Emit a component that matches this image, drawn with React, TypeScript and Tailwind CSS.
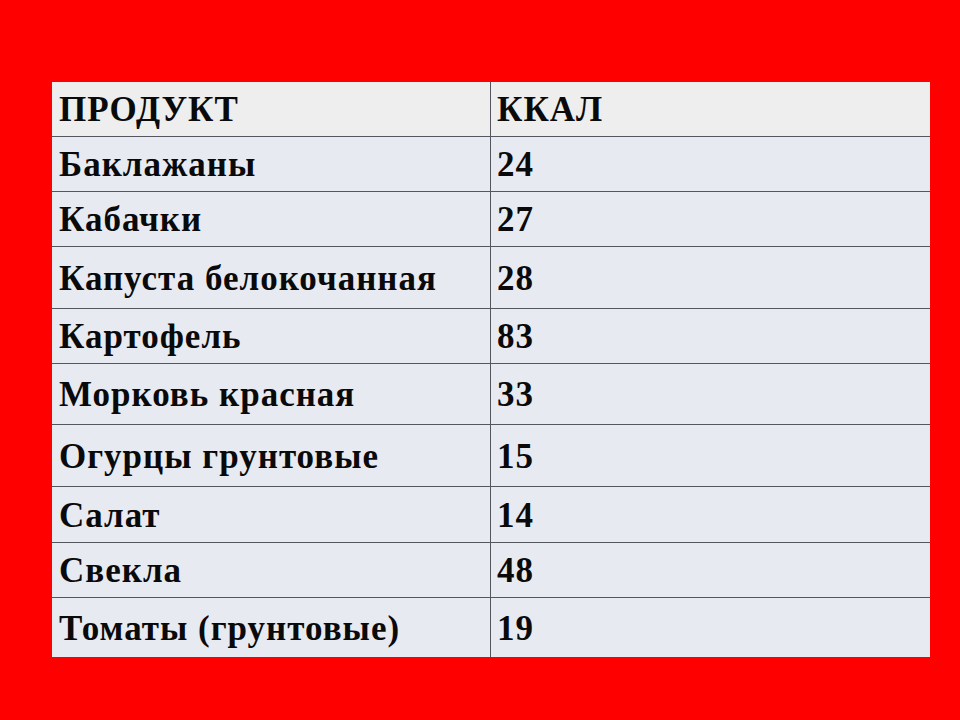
const rows: [string, string, number][] = [
  ["Баклажаны", "24", 55],
  ["Кабачки", "27", 55],
  ["Капуста белокочанная", "28", 62],
  ["Картофель", "83", 55],
  ["Морковь красная", "33", 61],
  ["Огурцы грунтовые", "15", 62],
  ["Салат", "14", 56],
  ["Свекла", "48", 55],
  ["Томаты (грунтовые)", "19", 60],
];

export default function App() {
  return (
    <div className="w-[960px] h-[720px] bg-[#ff0000] pt-[82px] pl-[52px]">
      <div
        className="w-[878px] bg-[#e8eaf2] text-[#0a0a0a] font-bold text-[35px] tracking-[1px]"
        style={{ fontFamily: '"Liberation Serif", "Times New Roman", serif' }}
      >
        <div className="flex h-[54px] bg-[#eeeeee]">
          <div className="w-[439px] border-r border-[#555560] flex items-center pl-[7px] pt-[2px]">ПРОДУКТ</div>
          <div className="flex-1 flex items-center pl-[6px] pt-[2px]">ККАЛ</div>
        </div>
        {rows.map(([name, kcal, h]) => (
          <div key={name} className="flex border-t border-[#555560]" style={{ height: h }}>
            <div className="w-[439px] border-r border-[#555560] flex items-center pl-[7px] pt-[3px]">{name}</div>
            <div className="flex-1 flex items-center pl-[6px] pt-[3px]">{kcal}</div>
          </div>
        ))}
      </div>
    </div>
  );
}
